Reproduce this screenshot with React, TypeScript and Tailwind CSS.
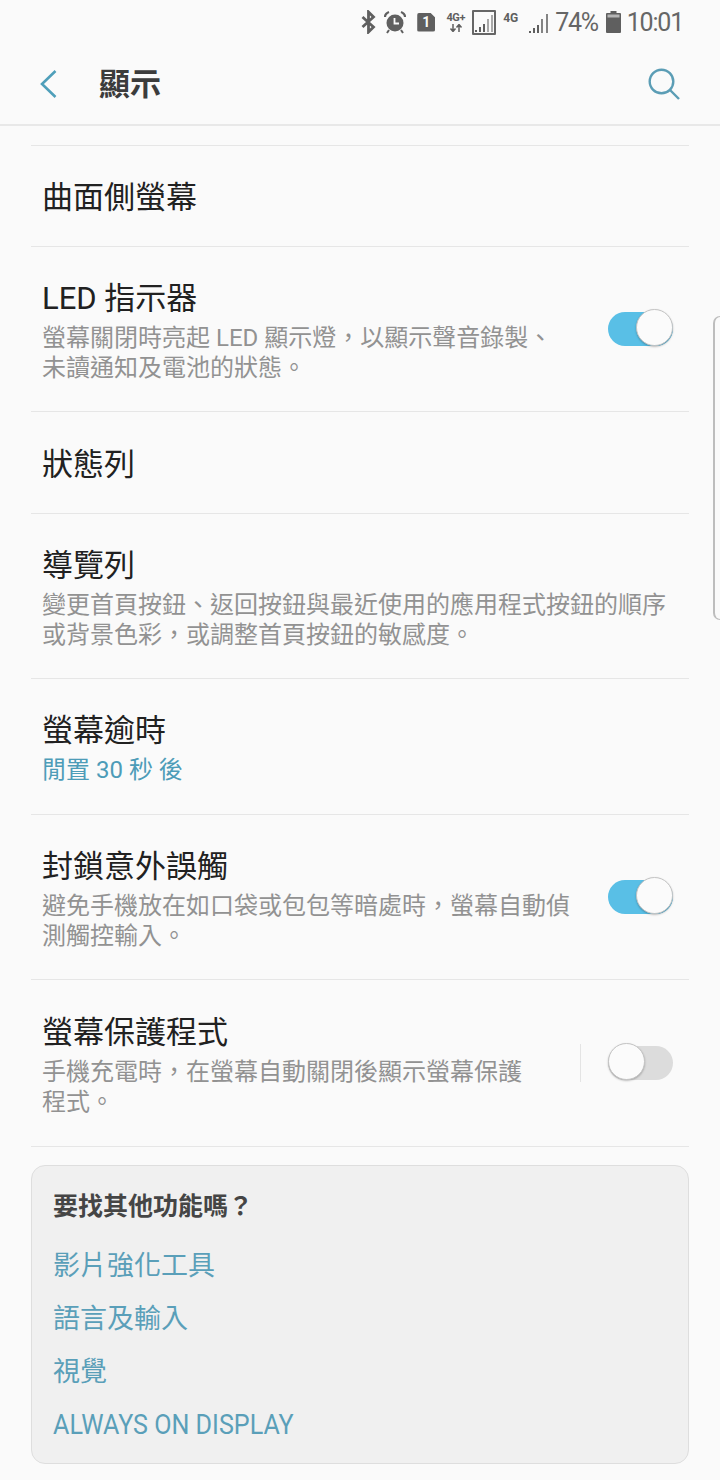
const font = { fontFamily: 'Roboto, "Noto Sans CJK TC", sans-serif' };

const Toggle = ({ on }: { on: boolean }) => (
  <div className={`relative w-[65px] h-[34px] rounded-full shrink-0 ${on ? "bg-[#59bfe6]" : "bg-[#dcdcdc]"}`}>
    <div
      className={`absolute top-[-3px] w-[37px] h-[37px] rounded-full bg-[#fbfbfb] border border-[#c4c4c4] shadow-[0_1px_2px_rgba(0,0,0,0.25)] ${on ? "right-0" : "left-0"}`}
    />
  </div>
);

interface RowProps {
  title: string;
  lines?: string[];
  link?: string;
  toggle?: boolean;
  divider?: boolean;
  height: string;
}

const Row = ({ title, lines, link, toggle, divider, height }: RowProps) => (
  <div className={`flex items-center justify-between pl-[11px] pr-4 border-b border-[#e6e6e6] ${height}`}>
    <div className={`min-w-0 ${lines || link ? "pt-[3px]" : "pt-[4px]"}`}>
      <div className="text-[31px] leading-[40px] text-[#212121]">{title}</div>
      {lines && (
        <div className="text-[24px] leading-[30px] text-[#929292] mt-[4px]">
          {lines.map((l) => (
            <div key={l} className="whitespace-nowrap">{l}</div>
          ))}
        </div>
      )}
      {link && <div className="text-[24px] leading-[30px] text-[#4d9cb8] mt-[4px]">{link}</div>}
    </div>
    {toggle !== undefined && (
      <div className="flex items-center">
        {divider && <div className="w-px h-[38px] bg-[#e4e4e4] mr-[27px]" />}
        <Toggle on={toggle} />
      </div>
    )}
  </div>
);

const StatusBar = () => (
  <div className="h-[44px] flex items-center justify-end pr-[37px] text-[#666666]">
    {/* bluetooth */}
    <svg width="15" height="24" viewBox="0 0 15 24" className="mr-[8px]" fill="none" stroke="#5f5f5f" strokeWidth="2.8">
      <path d="M1.500 7l11 10-5 5V2l5 5-11 10" />
    </svg>
    {/* alarm */}
    <svg width="22" height="24" viewBox="0 0 22 24" className="mr-[11px]">
      <circle cx="11" cy="13" r="8.500" fill="#5f5f5f" />
      <path d="M10.500 8v5.500h4.500" fill="none" stroke="#fafafa" strokeWidth="1.8" />
      <path d="M1 7c0-2 1.500-4 4-5M21 7c0-2-1.500-4-4-5" fill="none" stroke="#5f5f5f" strokeWidth="2.2" />
      <path d="M5 20l-2 3M17 20l2 3" stroke="#5f5f5f" strokeWidth="2" />
    </svg>
    {/* sim 1 */}
    <div className="w-[18px] h-[19px] mr-[10px] bg-[#5f5f5f] rounded-[2px] flex items-center justify-center text-[#fafafa] text-[14px] font-bold leading-none [clip-path:polygon(0_0,72%_0,100%_26%,100%_100%,0_100%)]">
      1
    </div>
    <div className="w-[21px] mr-[6px] flex flex-col items-center text-[#5f5f5f]">
      <span className="text-[11px] font-bold leading-[12px] tracking-[-0.4px] whitespace-nowrap">4G+</span>
      <svg width="14" height="8" viewBox="0 0 14 8">
        <path d="M4 0v7M1.500 4.500L4 7.500l2.500-3M10 8V1M7.500 3.500L10 .5l2.500 3" fill="none" stroke="#5f5f5f" strokeWidth="1.5" />
      </svg>
    </div>
    {/* signal boxed */}
    <div className="w-[24px] h-[25px] mr-[7px] border-2 border-[#666666] rounded-[1px] flex items-end justify-center">
      <svg width="20" height="21" viewBox="0 0 20 21">
        <path d="M2 20v-2M6 20v-5M10 20v-8" stroke="#5f5f5f" strokeWidth="2" />
        <path d="M14 20V7M18 20V3" stroke="#a8a8a8" strokeWidth="2" />
      </svg>
    </div>
    <span className="w-[16px] text-[12px] font-bold leading-none mb-[8px] mr-[10px] text-[#5f5f5f] whitespace-nowrap">4G</span>
    <svg width="20" height="22" viewBox="0 0 20 22" className="mr-[6px] mt-[2px]">
      <path d="M1 21v-2M5 21v-5M9 21v-8" stroke="#5f5f5f" strokeWidth="2" />
      <path d="M13 21V7M18 21V2" stroke="#777777" strokeWidth="1.8" />
    </svg>
    <span className="text-[25px] leading-none mr-[8px] tracking-[-1.3px]">74%</span>
    {/* battery */}
    <svg width="15" height="22" viewBox="0 0 15 22" className="mr-[6px]">
      <rect x="4.500" y="0" width="6" height="3" fill="#5f5f5f" />
      <rect x="0" y="2" width="15" height="20" rx="1" fill="#5f5f5f" />
      <rect x="1.500" y="3.500" width="12" height="3" fill="#b5b5b5" />
    </svg>
    <span className="text-[25px] leading-none tracking-[-1.2px]">10:01</span>
  </div>
);

export default function App() {
  return (
    <div className="relative w-[720px] h-[1480px] overflow-hidden bg-[#fafafa]" style={font}>
      <StatusBar />

      {/* App bar */}
      <header className="h-[82px] flex items-center justify-between border-b-2 border-[#e8e8e8] pl-[39px] pr-[40px]">
        <div className="flex items-center">
          <svg width="18" height="30" viewBox="0 0 18 30" fill="none" stroke="#4f9fba" strokeWidth="2.6">
            <path d="M16.500 2L3 15l13.500 13" />
          </svg>
          <h1 className="ml-[42px] mt-[1px] text-[31px] font-bold text-[#3c3c3c] leading-none">顯示</h1>
        </div>
        <svg width="32" height="32" viewBox="0 0 32 32" fill="none" stroke="#5b9db5" strokeWidth="2.4">
          <circle cx="13.500" cy="13.500" r="11.800" />
          <path d="M22 22l9 9" />
        </svg>
      </header>

      <div className="mx-[31px] mt-[19px]">
        <div className="border-b border-[#e6e6e6]" />
        <Row title="曲面側螢幕" height="h-[101px]" />
        <Row
          title="LED 指示器"
          lines={["螢幕關閉時亮起 LED 顯示燈，以顯示聲音錄製、", "未讀通知及電池的狀態。"]}
          toggle
          height="h-[165px]"
        />
        <Row title="狀態列" height="h-[102px]" />
        <Row
          title="導覽列"
          lines={["變更首頁按鈕、返回按鈕與最近使用的應用程式按鈕的順序", "或背景色彩，或調整首頁按鈕的敏感度。"]}
          height="h-[165px]"
        />
        <Row title="螢幕逾時" link="閒置 30 秒 後" height="h-[136px]" />
        <Row
          title="封鎖意外誤觸"
          lines={["避免手機放在如口袋或包包等暗處時，螢幕自動偵", "測觸控輸入。"]}
          toggle
          height="h-[165px]"
        />
        <Row
          title="螢幕保護程式"
          lines={["手機充電時，在螢幕自動關閉後顯示螢幕保護", "程式。"]}
          toggle={false}
          divider
          height="h-[167px]"
        />

        {/* Looking for other features */}
        <div className="mt-[18px] h-[299px] rounded-[14px] border border-[#dedede] bg-[#f0f0f0] px-[21px] pt-[21px]">
          <div className="text-[25px] leading-[40px] font-bold text-[#454545]">要找其他功能嗎？</div>
          <div className="mt-[19px] flex flex-col gap-[13px] text-[27px] leading-[40px] text-[#5a9fb9]">
            <div>影片強化工具</div>
            <div>語言及輸入</div>
            <div>視覺</div>
            <div className="origin-left scale-x-[0.93] whitespace-nowrap">ALWAYS ON DISPLAY</div>
          </div>
        </div>
      </div>

      {/* Edge panel handle */}
      <div className="absolute right-0 top-[316px] w-[7px] h-[304px] border-l-2 border-y border-[#bdbdbd] rounded-l-[8px]" />
    </div>
  );
}
